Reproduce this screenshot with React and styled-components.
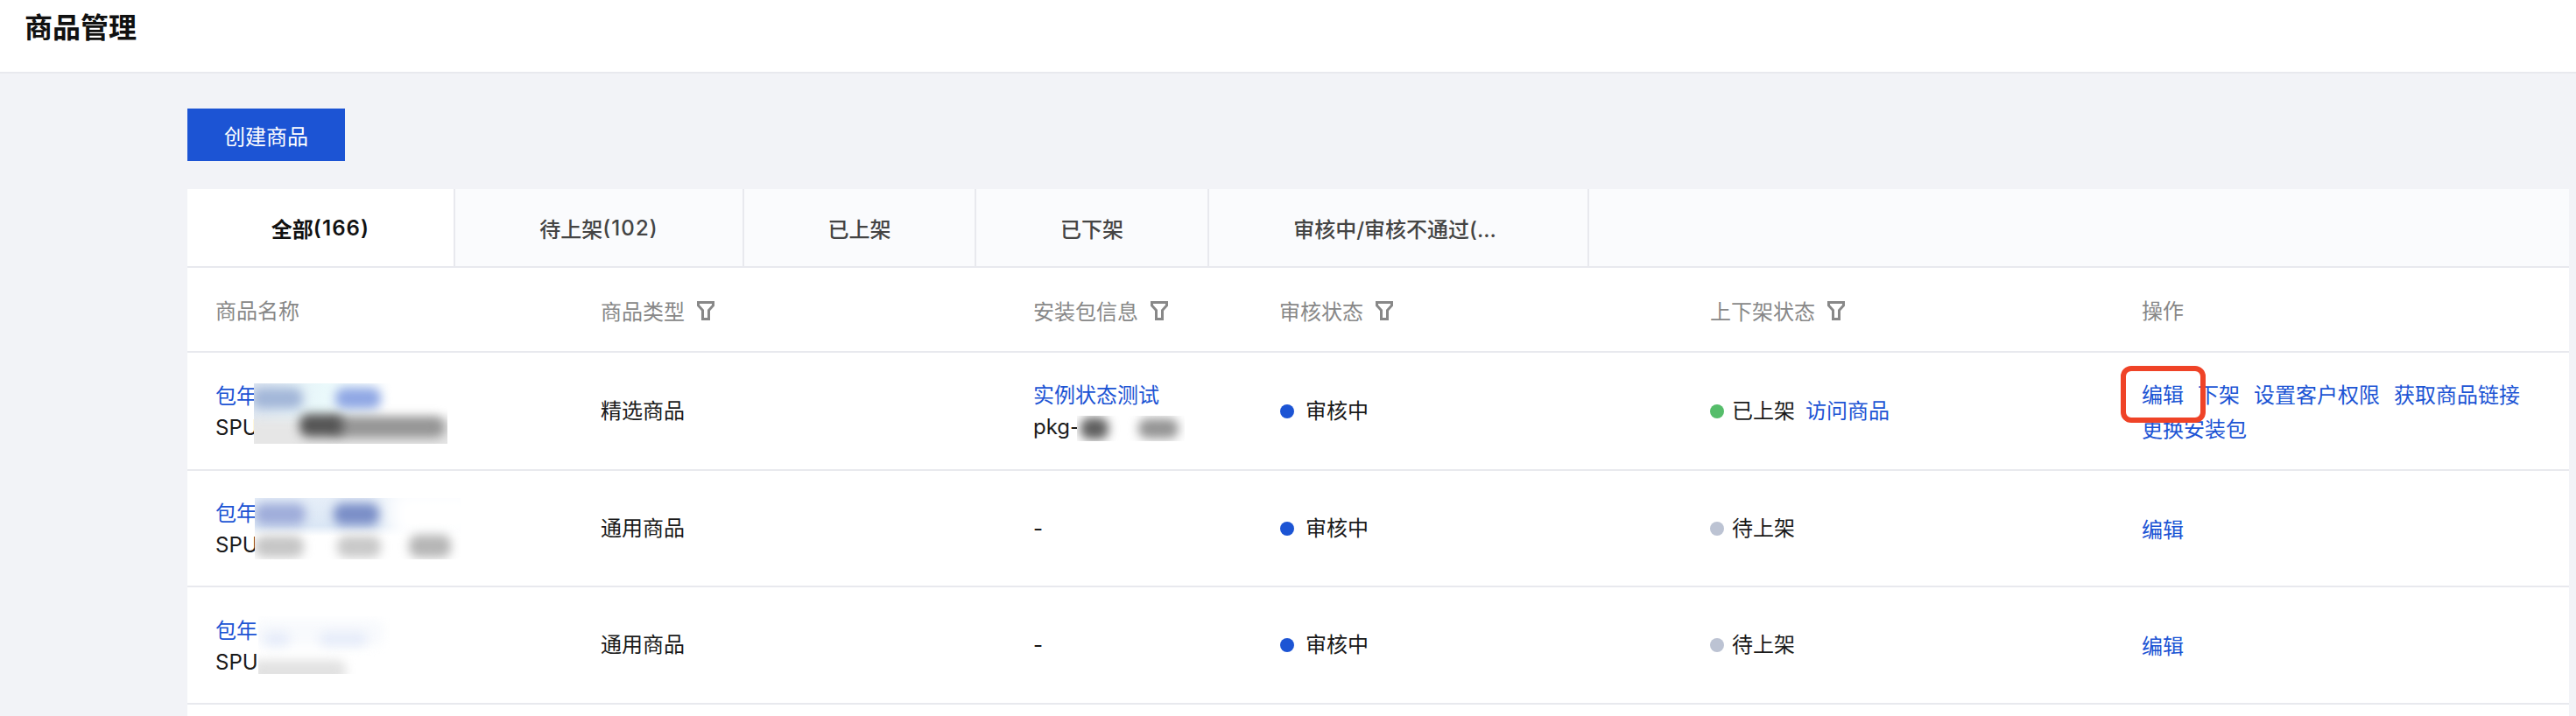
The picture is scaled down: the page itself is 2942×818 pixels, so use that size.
import React from "react";
import styled, { createGlobalStyle } from "styled-components";

const GlobalStyle = createGlobalStyle`
    html, body {
        margin: 0;
        height: 100%;
        overflow: hidden;
        background: #f2f3f7;
        font-family: Inter, "Noto Sans CJK SC", sans-serif;
        font-size: 24px;
        color: #1a1a1a;
    }
    * {
        box-sizing: border-box;
    }
`;

const BLUE = "#1c54d4";
const COLUMNS = "440px 494px 281px 492px 493px 1fr";

const PageHeader = styled.header`
    height: 84px;
    padding: 12px 28px 0;
    background: #fff;
    border-bottom: 2px solid #e8e9ee;
`;

const PageTitle = styled.h1`
    margin: 0;
    font-size: 32px;
    line-height: 40px;
    font-weight: 600;
    color: #111;
`;

const Main = styled.main`
    padding: 40px 8px 0 214px;
`;

const CreateButton = styled.button`
    display: block;
    width: 180px;
    height: 60px;
    margin-bottom: 32px;
    padding: 0;
    border: 0;
    background: ${BLUE};
    color: #fff;
    font: inherit;
`;

const TabBar = styled.div`
    display: flex;
    height: 90px;
    background: #fafbfd;
    border-bottom: 2px solid #e8e9ee;
`;

const Tab = styled.div`
    width: ${(p) => p.$width}px;
    display: flex;
    align-items: center;
    justify-content: center;
    padding-right: ${(p) => p.$shift || 0}px;
    border-right: 2px solid #e8e9ee;
    background: ${(p) => (p.$active ? "#fff" : "transparent")};
    color: ${(p) => (p.$active ? "#111" : "#444")};
    font-weight: ${(p) => (p.$active ? 600 : 500)};
`;

const TabCount = styled.span`
    letter-spacing: 1.1px;
`;

const Table = styled.div`
    background: #fff;
    height: 512px;
`;

const Row = styled.div`
    display: grid;
    grid-template-columns: ${COLUMNS};
    height: ${(p) => p.$height}px;
    border-bottom: 2px solid #e8e9ee;
`;

const HeadCell = styled.div`
    display: flex;
    align-items: center;
    gap: 14px;
    padding: ${(p) => (p.$filter ? "2px" : "0")} 0 0 32px;
    color: #888;
`;

const FilterIcon = styled.svg`
    width: 20px;
    height: 22px;
    flex: none;
`;

const Cell = styled.div`
    position: relative;
    display: flex;
    flex-direction: column;
    justify-content: center;
    padding: ${(p) => p.$top || 0}px 0 0 32px;
    line-height: 36px;
`;

const Link = styled.a`
    color: ${BLUE};
    white-space: nowrap;
`;

const Status = styled.div`
    display: flex;
    align-items: center;
    gap: ${(p) => p.$gap}px;
    margin-left: ${(p) => p.$inset || 0}px;
`;

const Dot = styled.span`
    width: 16px;
    height: 16px;
    border-radius: 50%;
    background: ${(p) => p.$color};
    flex: none;
`;

const VisitLink = styled(Link)`
    margin-left: 3px;
`;

const Actions = styled.div`
    position: relative;
    display: flex;
    flex-wrap: wrap;
    column-gap: 16px;
    line-height: 39px;
    padding-top: 3px;
`;

const Highlight = styled.div`
    position: absolute;
    left: -24px;
    top: -11px;
    width: 97px;
    height: 65px;
    border: 6px solid #ef4327;
    border-radius: 12px;
`;

// Mosaic patches hiding product ids in the screenshot
const Smudge = styled.div`
    position: absolute;
    left: ${(p) => p.$x}px;
    top: ${(p) => p.$y}px;
    width: ${(p) => p.$w}px;
    height: ${(p) => p.$h}px;
    overflow: hidden;
    background: ${(p) => p.$bg};
`;

const Blob = styled.div`
    position: absolute;
    left: ${(p) => p.$x}px;
    top: ${(p) => p.$y}px;
    width: ${(p) => p.$w}px;
    height: ${(p) => p.$h}px;
    border-radius: 10px;
    background: ${(p) => p.$color};
    filter: blur(${(p) => p.$blur || 6}px);
`;

const Filter = () => (
    <FilterIcon viewBox="0 0 20 22" fill="none">
        <path d="M1.5 1.5H18.5V5L13.5 10.5V20.5H6.5V10.5L1.5 5Z" stroke="#888" strokeWidth="3" />
    </FilterIcon>
);

const tabs = [
    { label: "全部", count: "(166)", width: 306, active: true },
    { label: "待上架", count: "(102)", width: 330 },
    { label: "已上架", width: 265 },
    { label: "已下架", width: 266 },
    { label: "审核中/审核不通过(...", width: 434, shift: 8 },
];

const heads = [
    { label: "商品名称" },
    { label: "商品类型", filter: true },
    { label: "安装包信息", filter: true },
    { label: "审核状态", filter: true },
    { label: "上下架状态", filter: true },
    { label: "操作" },
];

const rows = [
    {
        height: 135,
        type: "精选商品",
        shelf: { label: "已上架", color: "#55bd6a", visit: true },
        smudge: {
            x: 76, y: 35, w: 221, h: 69,
            bg: "linear-gradient(100deg, #dfe7f2 0, #eaf9fb 35%, #f6fcfd 55%, #fff 68%)",
            blobs: [
                { x: -10, y: 40, w: 260, h: 50, color: "#e6e6e6", blur: 6 },
                { x: -2, y: 5, w: 58, h: 24, color: "#a2b6d8" },
                { x: 93, y: 5, w: 52, h: 24, color: "#8fa7e4" },
                { x: 90, y: 38, w: 128, h: 24, color: "#959595" },
                { x: 52, y: 35, w: 50, h: 26, color: "#555" },
            ],
        },
        pkg: {
            x: 82, y: 72, w: 123, h: 29,
            bg: "#fff",
            blobs: [
                { x: 4, y: 2, w: 32, h: 25, color: "#5f5f5f" },
                { x: 70, y: 3, w: 46, h: 23, color: "#959595" },
            ],
        },
        actions: ["编辑", "下架", "设置客户权限", "获取商品链接", "更换安装包"],
        mark: true,
    },
    {
        height: 133,
        type: "通用商品",
        shelf: { label: "待上架", color: "#bcc3d3" },
        smudge: {
            x: 77, y: 31, w: 235, h: 70,
            bg: "linear-gradient(180deg, #e6eef8 0, #dbe7f5 45%, #fff 62%)",
            blobs: [
                { x: 150, y: -14, w: 110, h: 68, color: "#fff", blur: 12 },
                { x: 0, y: 6, w: 58, h: 25, color: "#9fadda" },
                { x: 90, y: 6, w: 52, h: 25, color: "#7a8ec7" },
                { x: 0, y: 43, w: 56, h: 25, color: "#c6c6c6" },
                { x: 94, y: 43, w: 50, h: 25, color: "#c9c9c9" },
                { x: 176, y: 42, w: 48, h: 26, color: "#b6b6b6" },
            ],
        },
        actions: ["编辑"],
    },
    {
        height: 134,
        type: "通用商品",
        shelf: { label: "待上架", color: "#bcc3d3" },
        smudge: {
            x: 81, y: 33, w: 150, h: 66,
            bg: "#fff",
            blobs: [
                { x: -6, y: 4, w: 150, h: 30, color: "#f8fafd" },
                { x: 6, y: 18, w: 30, h: 16, color: "#e6ecf9" },
                { x: 70, y: 18, w: 54, h: 16, color: "#e6ecf9" },
                { x: -8, y: 50, w: 108, h: 26, color: "#e2e2e2" },
            ],
        },
        actions: ["编辑"],
    },
];

const Patch = ({ data }) => (
    <Smudge $x={data.x} $y={data.y} $w={data.w} $h={data.h} $bg={data.bg}>
        {data.blobs.map((b, i) => (
            <Blob key={i} $x={b.x} $y={b.y} $w={b.w} $h={b.h} $color={b.color} $blur={b.blur} />
        ))}
    </Smudge>
);

export default function App() {
    return (
        <>
            <GlobalStyle />
            <PageHeader>
                <PageTitle>商品管理</PageTitle>
            </PageHeader>
            <Main>
                <CreateButton>创建商品</CreateButton>
                <TabBar>
                    {tabs.map((t) => (
                        <Tab key={t.label} $width={t.width} $active={t.active} $shift={t.shift}>
                            {t.label}
                            {t.count && <TabCount>{t.count}</TabCount>}
                        </Tab>
                    ))}
                </TabBar>
                <Table>
                    <Row $height={97}>
                        {heads.map((h) => (
                            <HeadCell key={h.label} $filter={h.filter}>
                                {h.label}
                                {h.filter && <Filter />}
                            </HeadCell>
                        ))}
                    </Row>
                    {rows.map((r, i) => (
                        <Row key={i} $height={r.height}>
                            <Cell $top={3}>
                                <Link>包年</Link>
                                <span>SPU</span>
                                <Patch data={r.smudge} />
                            </Cell>
                            <Cell>{r.type}</Cell>
                            <Cell>
                                {r.pkg ? (
                                    <>
                                        <Link>实例状态测试</Link>
                                        <span>pkg-</span>
                                        <Patch data={r.pkg} />
                                    </>
                                ) : "-"}
                            </Cell>
                            <Cell>
                                <Status $gap={13} $inset={1}>
                                    <Dot $color={BLUE} />
                                    审核中
                                </Status>
                            </Cell>
                            <Cell>
                                <Status $gap={9}>
                                    <Dot $color={r.shelf.color} />
                                    {r.shelf.label}
                                    {r.shelf.visit && <VisitLink>访问商品</VisitLink>}
                                </Status>
                            </Cell>
                            <Cell>
                                <Actions>
                                    {r.actions.map((a) => (
                                        <Link key={a}>{a}</Link>
                                    ))}
                                    {r.mark && <Highlight />}
                                </Actions>
                            </Cell>
                        </Row>
                    ))}
                </Table>
            </Main>
        </>
    );
}
